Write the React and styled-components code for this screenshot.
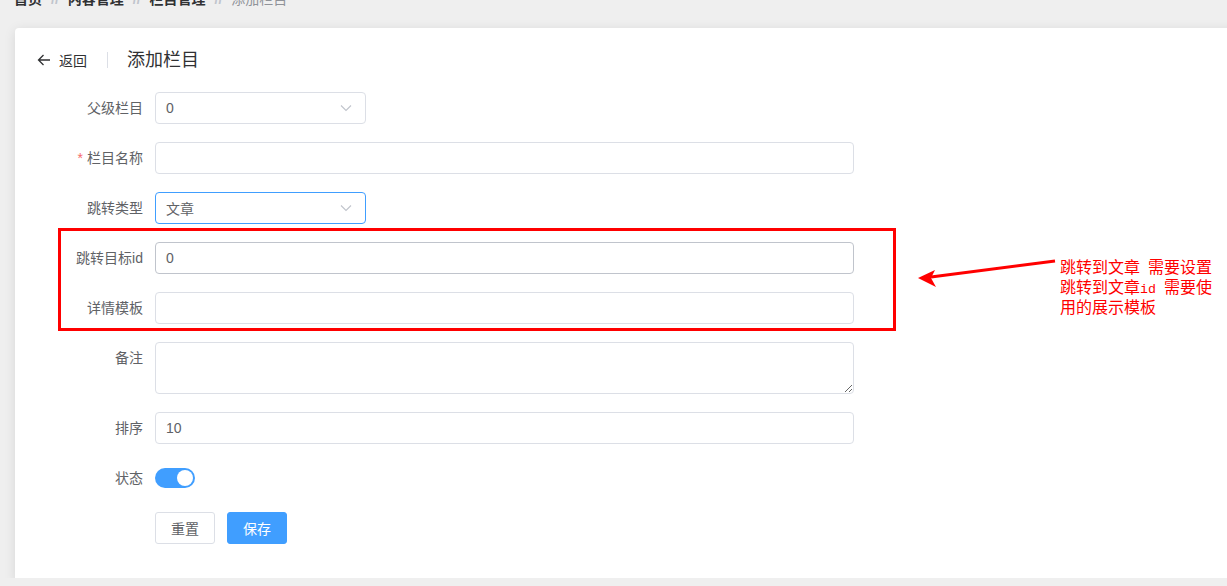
import React from "react"
import styled, { createGlobalStyle } from "styled-components"

const GlobalStyle = createGlobalStyle`
  html, body {
    margin: 0;
    padding: 0;
    background-color: #efefef;
    overflow: hidden;
  }

  body {
    font-family: "Liberation Sans", "Noto Sans CJK SC", sans-serif;
    font-size: 14px;
    color: #606266;
  }

  * {
    box-sizing: border-box;
  }
`

const Page = styled.div`
  padding: 0 0 0 15px;
  width: 1260px;
  height: 586px;
`

const Breadcrumb = styled.div`
  display: flex;
  align-items: center;
  margin: -8px 0 0 -1px;
  height: 14px;
  line-height: 14px;
  font-size: 14px;
`

const Crumb = styled.span`
  font-weight: ${(p) => (p.$current ? 400 : 700)};
  color: ${(p) => (p.$current ? "#909399" : "#303133")};
`

const CrumbSep = styled.span`
  margin: 0 9px;
  color: #c0c4cc;
  font-weight: 700;
`

const Card = styled.div`
  margin-top: 22px;
  width: 1240px;
  background-color: #fff;
  border-radius: 4px;
  box-shadow: 0 2px 12px 0 rgba(0, 0, 0, 0.1);
  padding: 20px 20px 2px;
`

const PageHeader = styled.div`
  display: flex;
  align-items: center;
  height: 24px;
  margin-bottom: 20px;
`

const Back = styled.div`
  display: flex;
  align-items: center;
  cursor: pointer;
  color: #303133;
  font-size: 14px;
  margin-left: 2px;

  & svg {
    margin-right: 8px;
  }
`

const HeaderDivider = styled.span`
  width: 1px;
  height: 16px;
  background-color: #dcdfe6;
  margin: 0 19px 0 20px;
`

const Title = styled.div`
  font-size: 18px;
  color: #303133;
  line-height: 24px;
`

const Form = styled.form`
  display: flex;
  flex-direction: column;
`

const Row = styled.div`
  display: flex;
  align-items: ${(p) => (p.$top ? "flex-start" : "center")};
  margin-bottom: 18px;
  min-height: 32px;
`

const Label = styled.label`
  width: 120px;
  flex-shrink: 0;
  padding-right: 12px;
  text-align: right;
  line-height: 32px;
  font-size: 14px;
  color: #606266;

  & b {
    color: #f56c6c;
    font-weight: 400;
    margin-right: 4px;
  }
`

const Field = styled.div`
  position: relative;
  width: ${(p) => p.$width || "699px"};
  height: 32px;
  border: 1px solid ${(p) => p.$border || "#dcdfe6"};
  border-radius: 4px;
  background-color: #fff;
  display: flex;
  align-items: center;
  padding: 0 10px;
  font-size: 14px;
  color: #606266;
`

const Chevron = styled.svg`
  position: absolute;
  right: 13px;
  top: 50%;
  margin-top: -4px;
`

const TextArea = styled.textarea`
  display: block;
  width: 699px;
  height: 52px;
  border: 1px solid #dcdfe6;
  border-radius: 4px;
  padding: 5px 10px;
  resize: vertical;
  font-family: inherit;
  font-size: 14px;
  line-height: 1.5;
  color: #606266;
  outline: none;
`

const Switch = styled.span`
  position: relative;
  display: inline-block;
  width: 40px;
  height: 20px;
  border-radius: 10px;
  background-color: #409eff;

  &::after {
    content: "";
    position: absolute;
    top: 2px;
    right: 2px;
    width: 16px;
    height: 16px;
    border-radius: 50%;
    background-color: #fff;
  }
`

const Actions = styled.div`
  display: flex;
  gap: 12px;
  padding-left: 120px;
  margin-bottom: 36px;
`

const Button = styled.button`
  width: 60px;
  height: 32px;
  border-radius: 3px;
  font-family: inherit;
  font-size: 14px;
  cursor: pointer;
  border: 1px solid ${(p) => (p.$primary ? "#409eff" : "#dcdfe6")};
  background-color: ${(p) => (p.$primary ? "#409eff" : "#fff")};
  color: ${(p) => (p.$primary ? "#fff" : "#606266")};
  padding: 0;
`

const Highlighted = styled.div`
  position: relative;
`

const Frame = styled.div`
  position: absolute;
  top: -14px;
  left: 23px;
  width: 838px;
  height: 103px;
  border: 3px solid #ff0000;
  pointer-events: none;
`

const Arrow = styled.svg`
  position: absolute;
  left: 870px;
  top: 0;
  overflow: visible;
`

const Note = styled.div`
  position: absolute;
  left: 1025px;
  top: 16px;
  width: 160px;
  white-space: nowrap;
  font-family: "Noto Sans CJK SC", "Liberation Mono", monospace;
  font-size: 16px;
  line-height: 16px;
  color: #ff0000;

  & i {
    font-style: normal;
    font-family: "Liberation Mono", monospace;
    font-size: 13.3px;
  }
`

const ChevronIcon = () => (
  <Chevron width="12" height="8" viewBox="0 0 12 8">
    <path d="M1 1.5 L6 6.5 L11 1.5" fill="none" stroke="#c0c4cc" strokeWidth="1.1" />
  </Chevron>
)

export default function App() {
  return (
    <Page>
      <GlobalStyle />

      <Breadcrumb>
        <Crumb>首页</Crumb>
        <CrumbSep>//</CrumbSep>
        <Crumb>内容管理</Crumb>
        <CrumbSep>//</CrumbSep>
        <Crumb>栏目管理</Crumb>
        <CrumbSep>//</CrumbSep>
        <Crumb $current>添加栏目</Crumb>
      </Breadcrumb>

      <Card>
        <PageHeader>
          <Back>
            <svg width="14" height="14" viewBox="0 0 14 14">
              <path
                d="M13 7 H1.5 M6.5 2 L1.5 7 L6.5 12"
                fill="none"
                stroke="#303133"
                strokeWidth="1.3"
              />
            </svg>
            返回
          </Back>
          <HeaderDivider />
          <Title>添加栏目</Title>
        </PageHeader>

        <Form>
          <Row>
            <Label>父级栏目</Label>
            <Field $width="211px">
              0
              <ChevronIcon />
            </Field>
          </Row>

          <Row>
            <Label>
              <b>*</b>栏目名称
            </Label>
            <Field />
          </Row>

          <Row>
            <Label>跳转类型</Label>
            <Field $width="211px" $border="#409eff">
              文章
              <ChevronIcon />
            </Field>
          </Row>

          <Highlighted>
            <Row>
              <Label>跳转目标id</Label>
              <Field $border="#c0c4cc">0</Field>
            </Row>

            <Row>
              <Label>详情模板</Label>
              <Field />
            </Row>

            <Frame />

            <Arrow width="160" height="50">
              <line x1="150" y1="19" x2="26" y2="35" stroke="#ff0000" strokeWidth="3" />
              <polygon points="13,36 30,28 26,36 31,45" fill="#ff0000" />
            </Arrow>

            <Note>
              跳转到文章<i> </i>需要设置
              <br />
              跳转到文章<i>id </i>需要使
              <br />
              用的展示模板
            </Note>
          </Highlighted>

          <Row $top>
            <Label>备注</Label>
            <TextArea readOnly />
          </Row>

          <Row>
            <Label>排序</Label>
            <Field>10</Field>
          </Row>

          <Row>
            <Label>状态</Label>
            <Switch />
          </Row>

          <Actions>
            <Button type="button">重置</Button>
            <Button type="button" $primary>
              保存
            </Button>
          </Actions>
        </Form>
      </Card>
    </Page>
  )
}
